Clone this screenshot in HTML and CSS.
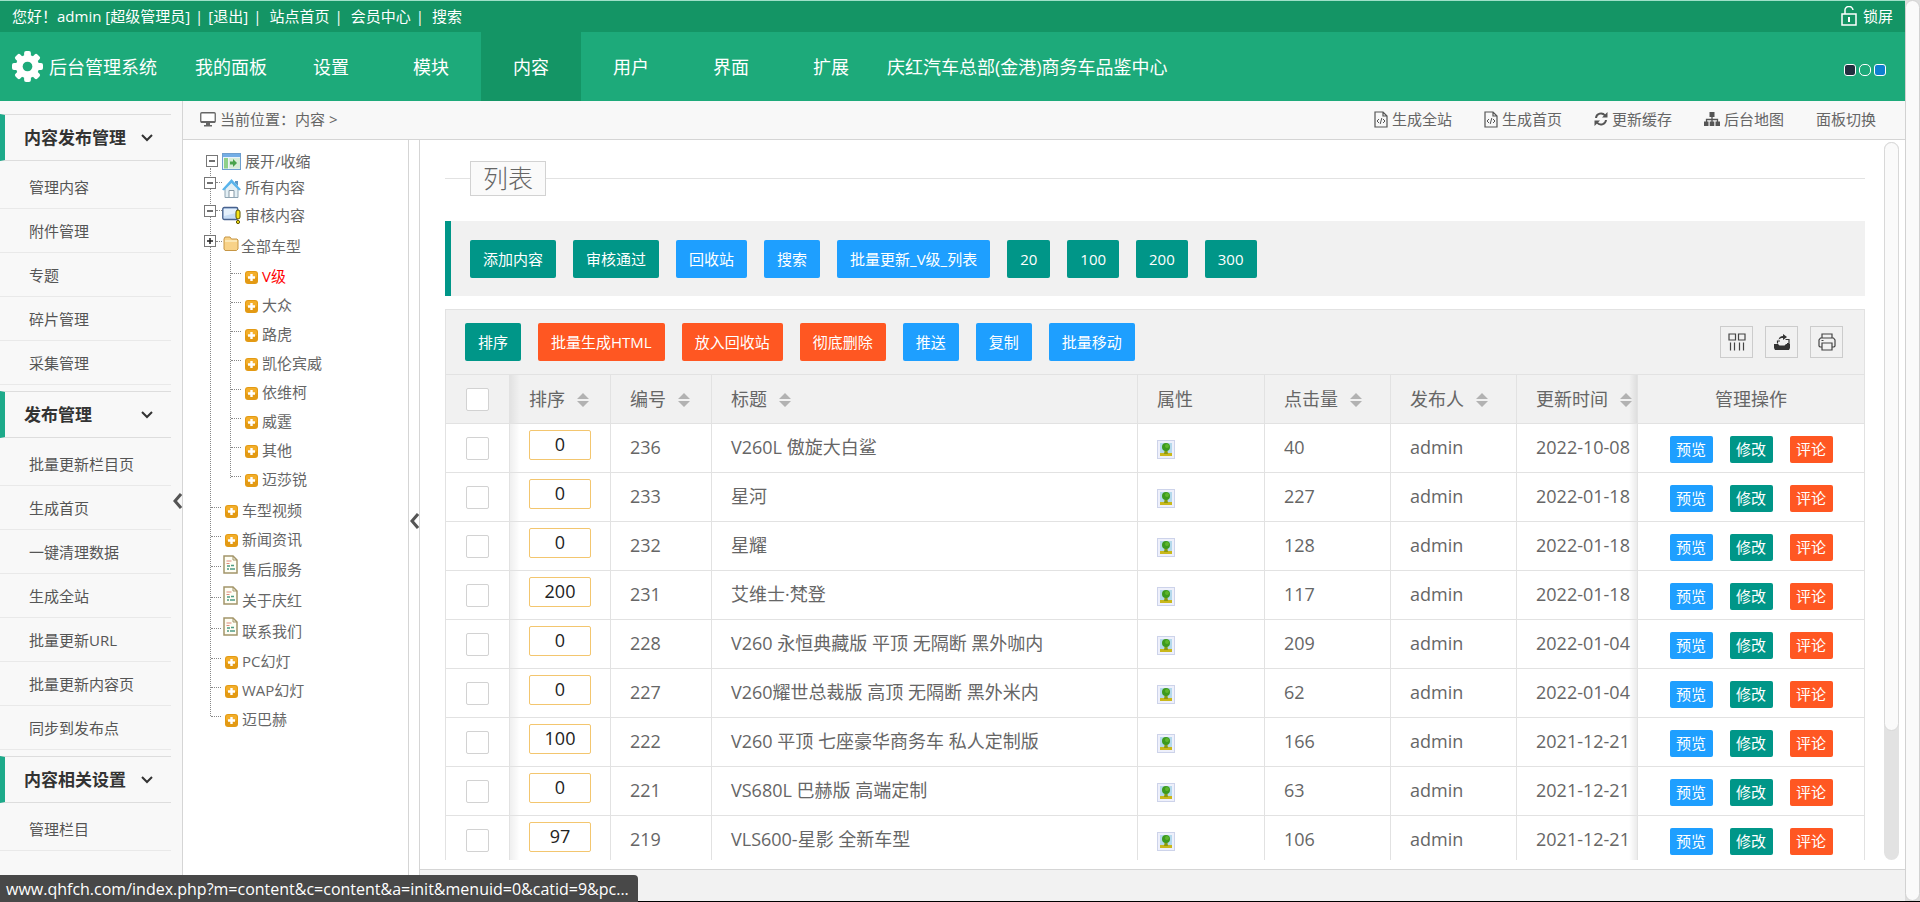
FILE: index.html
```html
<!DOCTYPE html>
<html lang="zh-CN">
<head>
<meta charset="utf-8">
<title>后台管理系统</title>
<link rel="stylesheet" href="styles.css">
</head>
<body>
<svg class="sprite" aria-hidden="true">
  <symbol id="chev" viewBox="0 0 12 8"><path d="M1 1l5 5 5-5" fill="none" stroke="#333" stroke-width="2"/></symbol>
  <symbol id="left" viewBox="0 0 9 16"><path d="M8 1L2 8l6 7" fill="none" stroke="#555" stroke-width="3"/></symbol>
  <symbol id="file-code" viewBox="0 0 14 18"><path d="M1 2h8l4 4v11H1zM9 2v4h4" fill="none" stroke="#555" stroke-width="1.200"/><path d="M5 9l-2 2 2 2M9 9l2 2-2 2M7.800 8l-1.600 6" fill="none" stroke="#555"/></symbol>
  <symbol id="plus" viewBox="0 0 13 13"><rect width="13" height="13" rx="3" fill="#e39a14"/><rect x="1" y="1" width="11" height="6" rx="2" fill="#f3ae2a"/><path d="M6.500 3v7M3 6.500h7" stroke="#fff" stroke-width="2.400"/></symbol>
  <symbol id="page" viewBox="0 0 15 19"><path d="M1 1h9l4 4v13H1z" fill="#fffef4" stroke="#a39569" stroke-width="1.500"/><path d="M10 1v4h4" fill="none" stroke="#a39569"/><path d="M3.500 6h5M3.500 8.500h3" stroke="#e08a7c"/><path d="M4 11h3M8 10.500h3M4 14h2M7 14h5" stroke="#4f9b84" stroke-width="1.400"/></symbol>
  <symbol id="minus-box" viewBox="0 0 12 12"><rect x=".5" y=".5" width="11" height="11" fill="#fff" stroke="#777"/><path d="M3 6h6" stroke="#222" stroke-width="1.300"/></symbol>
  <symbol id="plus-box" viewBox="0 0 12 12"><rect x=".5" y=".5" width="11" height="11" fill="#fff" stroke="#777"/><path d="M3 6h6M6 3v6" stroke="#222" stroke-width="1.500"/></symbol>
  <symbol id="sort" viewBox="0 0 12 16"><path d="M0 7l6-6 6 6zM0 9h12l-6 6z" fill="#b2b2b2"/></symbol>
  <symbol id="thumb" viewBox="0 0 18 19"><rect x=".5" y=".5" width="17" height="18" fill="#eef0fb" stroke="#cdd3ea"/><rect x="3" y="3" width="12" height="10" fill="#b4d9ec"/><path d="M3 13h12v3H3z" fill="#c9b81c"/><path d="M8 8h2l1 6H7z" fill="#8a9a10"/><circle cx="9" cy="7" r="4" fill="#3c9a1e"/><circle cx="10" cy="6" r="2" fill="#5db62c"/></symbol>
</svg>
<div class="window">
  <div class="app">
    <header class="topbar">
      <div class="welcome"><span>您好！admin [超级管理员]</span><i>|</i><a href="#">[退出]</a><i>|</i><a class="wide" href="#">站点首页</a><i>|</i><a class="wide" href="#">会员中心</a><i>|</i><a class="wide" href="#">搜索</a></div>
      <a class="lock" href="#"><svg width="16" height="20" viewBox="0 0 16 20"><path d="M1 8h14v11H1zM4 8V5a4 4 0 0 1 8-1" fill="none" stroke="#fff" stroke-width="1.500"/><path d="M8 11v5" stroke="#fff" stroke-width="2"/></svg>锁屏</a>
    </header>
    <nav class="mainnav">
      <a class="brand" href="#"><svg width="31" height="31" viewBox="-16 -16 32 32"><g fill="#fff"><circle r="12"/><rect x="-3.500" y="-16" width="7" height="32" rx="2"/><rect x="-3.500" y="-16" width="7" height="32" rx="2" transform="rotate(45)"/><rect x="-3.500" y="-16" width="7" height="32" rx="2" transform="rotate(90)"/><rect x="-3.500" y="-16" width="7" height="32" rx="2" transform="rotate(135)"/></g><circle r="5" fill="#1daa7a"/></svg>后台管理系统</a>
      <a href="#">我的面板</a><a href="#">设置</a><a href="#">模块</a><a class="on" href="#">内容</a><a href="#">用户</a><a href="#">界面</a><a href="#">扩展</a><a class="site" href="#">庆红汽车总部(金港)商务车品鉴中心</a>
      <div class="themes"><button class="dark" aria-label="深色"></button><button aria-label="绿色"></button><button class="blue" aria-label="蓝色"></button></div>
    </nav>
    <div class="body">
      <aside class="side">
        <h2>内容发布管理<svg width="12" height="8"><use href="#chev"/></svg></h2>
        <ul><li><a href="#">管理内容</a></li><li><a href="#">附件管理</a></li><li><a href="#">专题</a></li><li><a href="#">碎片管理</a></li><li><a href="#">采集管理</a></li></ul>
        <h2>发布管理<svg width="12" height="8"><use href="#chev"/></svg></h2>
        <ul><li><a href="#">批量更新栏目页</a></li><li><a href="#">生成首页</a></li><li><a href="#">一键清理数据</a></li><li><a href="#">生成全站</a></li><li><a href="#">批量更新URL</a></li><li><a href="#">批量更新内容页</a></li><li><a href="#">同步到发布点</a></li></ul>
        <h2>内容相关设置<svg width="12" height="8"><use href="#chev"/></svg></h2>
        <ul><li><a href="#">管理栏目</a></li></ul>
        <button class="fold" aria-label="收起菜单"><svg width="9" height="16"><use href="#left"/></svg></button>
      </aside>
      <div class="work">
        <div class="crumbs">
          <span class="where"><svg width="16" height="15" viewBox="0 0 16 15"><rect x=".75" y=".75" width="14.500" height="9.500" rx="1" fill="#fff" stroke="#666" stroke-width="1.300"/><path d="M1 9h14v2H1zM6 11h4v2h2v1.500H4V13h2z" fill="#666"/></svg>当前位置：内容 &gt;</span>
          <div class="quick">
            <a href="#"><svg width="14" height="18"><use href="#file-code"/></svg>生成全站</a>
            <a href="#"><svg width="14" height="18"><use href="#file-code"/></svg>生成首页</a>
            <a href="#"><svg width="14" height="14" viewBox="0 0 14 14"><path d="M2 6a5 5 0 0 1 9-2.500M12 8a5 5 0 0 1-9 2.500" fill="none" stroke="#555" stroke-width="2"/><path d="M13.500 0v5.500H8zM.5 14V8.500H6z" fill="#555"/></svg>更新缓存</a>
            <a href="#"><svg width="16" height="16" viewBox="0 0 16 16"><path d="M5.500 1h5v5h-5zM0 10.500h4.500V15H0zM5.700 10.500h4.600V15H5.700zM11.500 10.500H16V15h-4.500z" fill="#555"/><path d="M8 5v6M2.500 11V8.500h11V11" fill="none" stroke="#555" stroke-width="1.300"/></svg>后台地图</a>
            <a href="#">面板切换</a>
          </div>
        </div>
        <div class="split">
          <div class="treepane">
            <ul class="tree">
              <li><a class="row first" href="#"><svg width="12" height="12"><use href="#minus-box"/></svg><svg class="big" width="19" height="17" viewBox="0 0 19 17"><rect x=".5" y=".5" width="18" height="16" fill="#eaf3fb" stroke="#6f9fcf"/><path d="M1 1h17v3H1z" fill="#74aee6"/><path d="M2 5h4v10.500H2z" fill="#8fd08a"/><path d="M7 5h11v10.500H7z" fill="#d9ecd7"/><path d="M8 8.500h3V6l4 4-4 4v-2.500H8z" fill="#49a24b"/></svg>展开/收缩</a></li>
              <li><a class="row top2" href="#"><svg width="12" height="12"><use href="#minus-box"/></svg><i class="dash"></i><svg class="big drop" width="19" height="19" viewBox="0 0 19 19"><path d="M3 9l6.500-6L16 9v9.500H3z" fill="#e3eff5" stroke="#8fa5b3"/><path d="M13 2h3v5l-3-3z" fill="#5d97c6"/><path d="M0 10.500L9.500 0 19 10.500l-2 1-7.500-7.500L2 11.500z" fill="#58b4ec"/><path d="M7 18v-6.500h5V18" fill="#fff" stroke="#8598a5"/></svg>所有内容</a></li>
              <li><a class="row" href="#"><svg width="12" height="12"><use href="#minus-box"/></svg><i class="dash"></i><svg class="big" width="19" height="18" viewBox="0 0 19 18"><rect x=".75" y="1.500" width="15" height="12" rx="1.500" fill="#c6ddf6" stroke="#47618e" stroke-width="1.300"/><path d="M2 3h12v4L2 10z" fill="#e4f0fc"/><rect x="14" y="4" width="4" height="9" rx="2" fill="#f4e318" stroke="#5c5200"/><circle cx="16" cy="16" r="1.600" fill="#f4e318" stroke="#5c5200"/></svg>审核内容</a></li>
              <li><a class="row mid" href="#"><svg width="12" height="12"><use href="#plus-box"/></svg><i class="dash"></i><svg class="folder" width="16" height="15" viewBox="0 0 16 15"><path d="M1 3l1-2h5l1.500 2H14l1 1v9l-1.500 1.500H2L1 13z" fill="#f8d288" stroke="#c69645"/><path d="M2 5h12" stroke="#fdeec5" stroke-width="1.500"/></svg>全部车型</a>
                <ul class="sub">
                  <li><a class="leaf cur" href="#"><svg width="13" height="13"><use href="#plus"/></svg>V级</a></li>
                  <li><a class="leaf" href="#"><svg width="13" height="13"><use href="#plus"/></svg>大众</a></li>
                  <li><a class="leaf" href="#"><svg width="13" height="13"><use href="#plus"/></svg>路虎</a></li>
                  <li><a class="leaf" href="#"><svg width="13" height="13"><use href="#plus"/></svg>凯伦宾威</a></li>
                  <li><a class="leaf" href="#"><svg width="13" height="13"><use href="#plus"/></svg>依维柯</a></li>
                  <li><a class="leaf" href="#"><svg width="13" height="13"><use href="#plus"/></svg>威霆</a></li>
                  <li><a class="leaf" href="#"><svg width="13" height="13"><use href="#plus"/></svg>其他</a></li>
                  <li><a class="leaf" href="#"><svg width="13" height="13"><use href="#plus"/></svg>迈莎锐</a></li>
                </ul>
              </li>
              <li><a class="leaf" href="#"><svg width="13" height="13"><use href="#plus"/></svg>车型视频</a></li>
              <li><a class="leaf" href="#"><svg width="13" height="13"><use href="#plus"/></svg>新闻资讯</a></li>
              <li><a class="leaf doc" href="#"><svg width="15" height="19"><use href="#page"/></svg>售后服务</a></li>
              <li><a class="leaf doc" href="#"><svg width="15" height="19"><use href="#page"/></svg>关于庆红</a></li>
              <li><a class="leaf doc" href="#"><svg width="15" height="19"><use href="#page"/></svg>联系我们</a></li>
              <li><a class="leaf" href="#"><svg width="13" height="13"><use href="#plus"/></svg>PC幻灯</a></li>
              <li><a class="leaf" href="#"><svg width="13" height="13"><use href="#plus"/></svg>WAP幻灯</a></li>
              <li><a class="leaf" href="#"><svg width="13" height="13"><use href="#plus"/></svg>迈巴赫</a></li>
            </ul>
          </div>
          <button class="gutter" aria-label="收起栏目"><svg width="9" height="16"><use href="#left"/></svg></button>
          <main class="main">
            <div class="view">
              <div class="content">
                <h1 class="title"><span>列表</span></h1>
                <div class="quote">
                  <button class="btn">添加内容</button><button class="btn">审核通过</button><button class="btn blue">回收站</button><button class="btn blue">搜索</button><button class="btn blue">批量更新_V级_列表</button><button class="btn">20</button><button class="btn">100</button><button class="btn">200</button><button class="btn">300</button>
                </div>
                <div class="grid">
                  <div class="tools">
                    <button class="btn">排序</button><button class="btn red">批量生成HTML</button><button class="btn red">放入回收站</button><button class="btn red">彻底删除</button><button class="btn blue">推送</button><button class="btn blue">复制</button><button class="btn blue">批量移动</button>
                    <div class="icons">
                      <button aria-label="筛选列"><svg width="18" height="18" viewBox="0 0 18 18"><path d="M1 1h6.500v6H1zM10.500 1H17v6h-6.500zM2.500 9.500v8M6.500 9.500v8M11.500 9.500v8M15.500 9.500v8" fill="none" stroke="#444" stroke-width="1.200"/></svg></button>
                      <button aria-label="导出"><svg width="18" height="18" viewBox="0 0 18 18"><path d="M1 11h4l1.500 1.500h5L13 11h4v4l-1 2H2l-1-2z" fill="#333"/><path d="M4.500 10.500V8H7M14 10.500h2V6.500h-3.500" fill="none" stroke="#333" stroke-width="1.200"/><path d="M5.500 7c.5-3 2-4 4.500-4V1l4 3-4 3V5C8 5 6.500 5.500 5.500 7z" fill="#333"/></svg></button>
                      <button aria-label="打印"><svg width="18" height="18" viewBox="0 0 18 18"><path d="M4 5V1h10v4M4 14H2l-1-1V7l1.500-2h13L17 7v6l-1 1h-2M4 10h10v7H4zM3.500 7.500h2" fill="none" stroke="#444" stroke-width="1.200"/></svg></button>
                    </div>
                  </div>
                  <table>
                    <colgroup><col class="c-check"><col class="c-sort"><col class="c-id"><col><col class="c-attr"><col class="c-hits"><col class="c-user"><col class="c-time"><col class="c-ops"></colgroup>
                    <thead><tr>
                      <th class="ck"><input type="checkbox" aria-label="全选"></th>
                      <th class="shade">排序<svg width="12" height="16"><use href="#sort"/></svg></th>
                      <th>编号<svg width="12" height="16"><use href="#sort"/></svg></th>
                      <th>标题<svg width="12" height="16"><use href="#sort"/></svg></th>
                      <th>属性</th>
                      <th>点击量<svg width="12" height="16"><use href="#sort"/></svg></th>
                      <th>发布人<svg width="12" height="16"><use href="#sort"/></svg></th>
                      <th class="fade">更新时间<svg width="12" height="16"><use href="#sort"/></svg></th>
                      <th class="ops">管理操作</th>
                    </tr></thead>
                    <tbody>
                      <tr><td class="ck"><input type="checkbox" aria-label="选择 236"></td><td class="shade"><input class="num" type="text" value="0" aria-label="排序 236"></td><td>236</td><td>V260L 傲旋大白鲨</td><td><svg class="pic" width="18" height="19"><use href="#thumb"/></svg></td><td>40</td><td>admin</td><td class="fade">2022-10-08</td><td class="ops"><button class="mini blue">预览</button><button class="mini">修改</button><button class="mini red">评论</button></td></tr>
                      <tr><td class="ck"><input type="checkbox" aria-label="选择 233"></td><td class="shade"><input class="num" type="text" value="0" aria-label="排序 233"></td><td>233</td><td>星河</td><td><svg class="pic" width="18" height="19"><use href="#thumb"/></svg></td><td>227</td><td>admin</td><td class="fade">2022-01-18</td><td class="ops"><button class="mini blue">预览</button><button class="mini">修改</button><button class="mini red">评论</button></td></tr>
                      <tr><td class="ck"><input type="checkbox" aria-label="选择 232"></td><td class="shade"><input class="num" type="text" value="0" aria-label="排序 232"></td><td>232</td><td>星耀</td><td><svg class="pic" width="18" height="19"><use href="#thumb"/></svg></td><td>128</td><td>admin</td><td class="fade">2022-01-18</td><td class="ops"><button class="mini blue">预览</button><button class="mini">修改</button><button class="mini red">评论</button></td></tr>
                      <tr><td class="ck"><input type="checkbox" aria-label="选择 231"></td><td class="shade"><input class="num" type="text" value="200" aria-label="排序 231"></td><td>231</td><td>艾维士·梵登</td><td><svg class="pic" width="18" height="19"><use href="#thumb"/></svg></td><td>117</td><td>admin</td><td class="fade">2022-01-18</td><td class="ops"><button class="mini blue">预览</button><button class="mini">修改</button><button class="mini red">评论</button></td></tr>
                      <tr><td class="ck"><input type="checkbox" aria-label="选择 228"></td><td class="shade"><input class="num" type="text" value="0" aria-label="排序 228"></td><td>228</td><td>V260 永恒典藏版 平顶 无隔断 黑外咖内</td><td><svg class="pic" width="18" height="19"><use href="#thumb"/></svg></td><td>209</td><td>admin</td><td class="fade">2022-01-04</td><td class="ops"><button class="mini blue">预览</button><button class="mini">修改</button><button class="mini red">评论</button></td></tr>
                      <tr><td class="ck"><input type="checkbox" aria-label="选择 227"></td><td class="shade"><input class="num" type="text" value="0" aria-label="排序 227"></td><td>227</td><td>V260耀世总裁版 高顶 无隔断 黑外米内</td><td><svg class="pic" width="18" height="19"><use href="#thumb"/></svg></td><td>62</td><td>admin</td><td class="fade">2022-01-04</td><td class="ops"><button class="mini blue">预览</button><button class="mini">修改</button><button class="mini red">评论</button></td></tr>
                      <tr><td class="ck"><input type="checkbox" aria-label="选择 222"></td><td class="shade"><input class="num" type="text" value="100" aria-label="排序 222"></td><td>222</td><td>V260 平顶 七座豪华商务车 私人定制版</td><td><svg class="pic" width="18" height="19"><use href="#thumb"/></svg></td><td>166</td><td>admin</td><td class="fade">2021-12-21</td><td class="ops"><button class="mini blue">预览</button><button class="mini">修改</button><button class="mini red">评论</button></td></tr>
                      <tr><td class="ck"><input type="checkbox" aria-label="选择 221"></td><td class="shade"><input class="num" type="text" value="0" aria-label="排序 221"></td><td>221</td><td>VS680L 巴赫版 高端定制</td><td><svg class="pic" width="18" height="19"><use href="#thumb"/></svg></td><td>63</td><td>admin</td><td class="fade">2021-12-21</td><td class="ops"><button class="mini blue">预览</button><button class="mini">修改</button><button class="mini red">评论</button></td></tr>
                      <tr><td class="ck"><input type="checkbox" aria-label="选择 219"></td><td class="shade"><input class="num" type="text" value="97" aria-label="排序 219"></td><td>219</td><td>VLS600-星影 全新车型</td><td><svg class="pic" width="18" height="19"><use href="#thumb"/></svg></td><td>106</td><td>admin</td><td class="fade">2021-12-21</td><td class="ops"><button class="mini blue">预览</button><button class="mini">修改</button><button class="mini red">评论</button></td></tr>
                    </tbody>
                  </table>
                </div>
              </div>
              <div class="track"><div class="thumb"></div></div>
            </div>
            <footer class="foot"></footer>
          </main>
        </div>
      </div>
    </div>
  </div>
  <div class="pagebar"><div class="pagethumb"></div></div>
</div>
<div class="status">www.qhfch.com/index.php?m=content&amp;c=content&amp;a=init&amp;menuid=0&amp;catid=9&amp;pc...</div>
</body>
</html>
```
FILE: styles.css
```css
* { box-sizing: border-box; }
body {
  margin: 0;
  font: 15px/20px "Open Sans", "Noto Sans CJK SC", sans-serif;
  color: #666;
  overflow: hidden;
}
a { color: inherit; text-decoration: none; }
ul { list-style: none; margin: 0; padding: 0; }
i { font-style: normal; }
button, input { font: inherit; margin: 0; }
button { border: 0; padding: 0; background: none; cursor: pointer; }
svg { display: block; flex: none; }
.sprite { position: absolute; width: 0; height: 0; }

.window { display: flex; height: 100vh; border-bottom: 1px solid #000; }
.app { flex: 1; min-width: 0; display: flex; flex-direction: column; }
.pagebar { width: 15px; background: #ddd; }
.pagethumb { height: 100%; background: #fafafa; border: 1px solid #d2d2d2; border-radius: 8px; }

.topbar {
  display: flex;
  justify-content: space-between;
  align-items: center;
  height: 32px;
  padding: 0 12px 2px;
  background: #149565;
  border-top: 1px solid #9fe0c8;
  color: #fff;
}
.welcome { display: flex; gap: 5px; }
.wide { margin-left: 3px; }
.lock { display: flex; align-items: center; gap: 6px; }

.mainnav {
  display: flex;
  height: 69px;
  background: #1daa7a;
  color: #fff;
  font-size: 18px;
}
.mainnav a {
  display: flex;
  align-items: center;
  justify-content: center;
  min-width: 100px;
}
.mainnav .brand { width: 181px; justify-content: flex-start; padding-left: 12px; gap: 6px; }
.mainnav .on { background: #149565; }
.mainnav .site { padding: 0 6px; }
.themes { margin-left: auto; display: flex; align-items: center; gap: 3px; padding-right: 19px; padding-top: 6px; }
.themes button { width: 12px; height: 12px; border: 1px solid #fff; border-radius: 5px; }
.themes .dark { background: #22303f; border-radius: 3px; }
.themes .blue { background: #0f80cf; border-radius: 3px; }

.body { flex: 1; display: flex; min-height: 0; }
.side {
  position: relative;
  width: 183px;
  flex: none;
  background: #f8f8f8;
  border-right: 1px solid #d5d5d5;
  padding: 7px 11px 0 0;
  overflow: hidden;
}
.side h2 {
  display: flex;
  justify-content: space-between;
  align-items: center;
  height: 47px;
  margin: 6px 0 4px;
  padding: 0 18px 0 19px;
  border: 1px solid #ddd;
  border-width: 1px 0;
  border-left: 5px solid #1daa8a;
  font-size: 17px;
  font-weight: 700;
  color: #333;
}
.side li a {
  display: flex;
  align-items: center;
  height: 44px;
  padding-left: 29px;
  border-bottom: 1px solid #e9e9e9;
  color: #555;
}
.fold { position: absolute; right: 0; top: 49%; }

.work { flex: 1; min-width: 0; display: flex; flex-direction: column; }
.crumbs {
  display: flex;
  justify-content: space-between;
  align-items: center;
  height: 39px;
  padding: 0 29px 2px 17px;
  background: #f8f8f8;
  border-bottom: 1px solid #d5d5d5;
}
.where, .quick a { display: flex; align-items: center; gap: 4px; }
.quick { display: flex; gap: 32px; }

.split { flex: 1; display: flex; min-height: 0; background: #fff; }
.treepane { width: 226px; flex: none; border-right: 1px solid #d5d5d5; padding: 8px 0 0 21px; overflow: hidden; }
.gutter { width: 11px; padding: 0; border-right: 1px solid #d5d5d5; display: flex; align-items: center; justify-content: flex-end; }

.tree, .sub { position: relative; }
.tree::before, .sub::before {
  content: "";
  position: absolute;
  left: 6px;
  top: 20px;
  bottom: 17px;
  border-left: 1px dotted #888;
}
.row { position: relative; display: flex; align-items: center; height: 30px; }
.row > svg:first-child { margin-bottom: 9px; }
.first { height: 26px; padding-left: 2px; }
.row.first > svg:first-child { margin: 0 4px 0 0; }
.top2 { height: 26px; }
.mid { height: 31px; }
.big { margin-right: 4px; }
.drop { margin-top: 2px; }
.folder { margin: 0 2px 4px 1px; }
.dash { width: 6px; height: 1px; border-top: 1px dotted #888; margin-bottom: 9px; }
.sub { margin-left: 20px; padding-bottom: 2px; }
.sub::before { top: 0; }
.leaf { display: flex; align-items: center; height: 29px; }
.leaf::before { content: ""; width: 10px; margin: 0 4px 5px 7px; border-top: 1px dotted #888; }
.leaf svg { margin: 4px 4px 0 0; }
.doc { height: 31px; }
.doc::before { margin-right: 2px; }
.leaf.doc svg { margin: 0 4px 8px 0; }
.cur { color: #f00; }

.main { flex: 1; min-width: 0; display: flex; flex-direction: column; }
.view { flex: 1; min-height: 0; display: flex; padding: 2px 6px 9px 0; }
.content { flex: 1; min-width: 0; padding: 19px 19px 0 25px; overflow: hidden; }
.foot { height: 32px; background: #f2f2f2; border-top: 1px solid #d5d5d5; }
.track { width: 15px; background: #e2e2e2; border-radius: 8px; }
.thumb { height: 82%; background: #fafafa; border: 1px solid #d8d8d8; border-radius: 8px; }

.title { display: flex; align-items: center; margin: 0 0 25px; font-size: 25px; font-weight: 300; }
.title::before, .title::after { content: ""; height: 1px; background: #e2e2e2; width: 25px; }
.title::after { flex: 1; }
.title span { padding: 0 12px; line-height: 33px; background: #fafafa; border: 1px solid #d2d2d2; }

.quote {
  display: flex;
  gap: 17px;
  padding: 19px 19px 18px;
  margin-bottom: 13px;
  background: #f1f1f1;
  border-left: 6px solid #009688;
}
.btn {
  height: 38px;
  padding: 0 13px;
  border-radius: 2px;
  background: #009688;
  color: #fff;
  white-space: nowrap;
}
.btn.blue, .mini.blue { background: #1e9fff; }
.btn.red, .mini.red { background: #ff5722; }

.grid { border: 1px solid #e2e2e2; }
.tools { display: flex; align-items: center; gap: 17px; height: 65px; padding: 0 21px 0 19px; background: #f1f1f1; border-bottom: 1px solid #e2e2e2; }
.icons { margin-left: auto; display: flex; gap: 12px; }
.icons button { display: flex; align-items: center; justify-content: center; width: 33px; height: 32px; border: 1px solid #ccc; }

table { width: 100%; table-layout: fixed; border-spacing: 0; font-size: 18px; }
.c-check { width: 64px; }
.c-sort, .c-id { width: 101px; }
.c-attr { width: 127px; }
.c-hits, .c-user { width: 126px; }
.c-time { width: 121px; }
.c-ops { width: 226px; }
th, td {
  height: 49px;
  padding: 0 0 0 19px;
  border: 1px solid #e2e2e2;
  border-width: 0 1px 1px 0;
  text-align: left;
  font-weight: 400;
  white-space: nowrap;
}
td { padding-bottom: 3px; }
th { background: #f1f1f1; }
th svg { display: inline-block; vertical-align: -2px; margin-left: 12px; }
.ops { border-right: 0; text-align: center; padding: 0; }
.ck { padding: 0 0 0 20px; }
.shade { background-image: linear-gradient(to right, #00000010, #0000 10px); }
.fade { background-image: linear-gradient(to left, #00000014, #0000 8px); }
input[type="checkbox"] { display: block; appearance: none; width: 23px; height: 23px; border: 1px solid #d2d2d2; border-radius: 2px; background: #fff; }
.num { display: block; width: 62px; height: 30px; margin-bottom: 3px; padding: 0 0 2px; border: 1px solid #f3c66f; border-radius: 2px; text-align: center; color: #222; }
.pic { margin-top: 6px; }
.mini {
  height: 27px;
  width: 43px;
  margin: 2px 0 0;
  border-radius: 2px;
  background: #009688;
  color: #fff;
  font-size: 15px;
  vertical-align: middle;
}
.mini + .mini { margin-left: 17px; }

.status {
  position: fixed;
  left: 0;
  bottom: 0;
  width: 638px;
  height: 27px;
  padding: 0 6px;
  line-height: 28px;
  font-size: 16px;
  background: #484848;
  color: #fff;
  border-top-right-radius: 4px;
  white-space: nowrap;
  overflow: hidden;
}
```
